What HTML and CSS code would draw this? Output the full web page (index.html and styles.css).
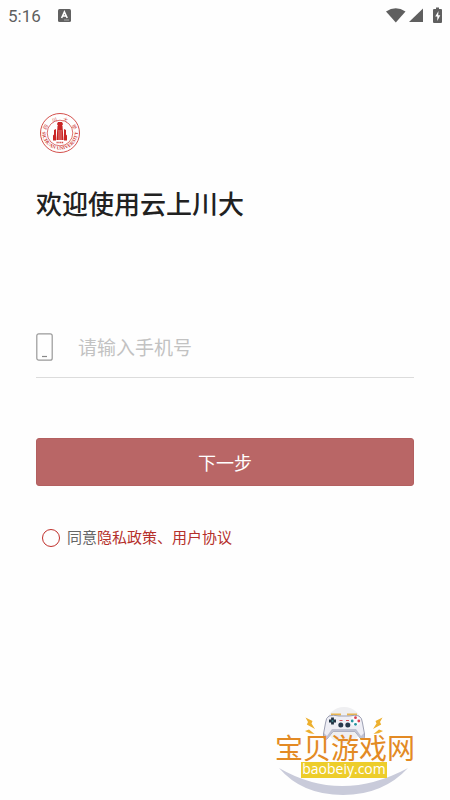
FILE: index.html
```html
<!DOCTYPE html>
<html lang="zh-CN">
<head>
<meta charset="utf-8">
<meta name="viewport" content="width=device-width, initial-scale=1">
<title>云上川大</title>
<link rel="stylesheet" href="styles.css">
</head>
<body>
<div class="screen">
  <header class="status">
    <span class="time">5:16</span>
    <svg class="app-badge" width="13" height="14" viewBox="0 0 13 14" aria-hidden="true">
      <rect width="13" height="13" rx="1.5" fill="#616161"/>
      <path d="M3.6 9 6.4 3 9.2 9M4.8 7H8" fill="none" stroke="#fff" stroke-width="1.6"/>
      <path d="M6 11h5" stroke="#aaa" stroke-width="1"/>
    </svg>
    <svg class="signals" width="56" height="18" viewBox="0 0 56 18" aria-hidden="true">
      <g fill="#5f5f5f">
        <path d="M0 4.500Q9.700 -1.800 19.500 4.500L9.800 15.500Z"/>
        <path d="M37 1.500V15H23Z"/>
        <path d="M48 2h2V0.500h3V2h2q1 0 1 1v12q0 1-1 1h-7q-1 0-1-1V3q0-1 1-1Z"/>
      </g>
      <path d="M52.500 4 49.200 9.500H51.300v4.500L54.300 8.300H52.200Z" fill="#fff"/>
    </svg>
  </header>

  <main class="login">
    <svg class="crest" width="42" height="42" viewBox="0 0 42 42" role="img" aria-label="四川大学">
      <defs>
        <path id="arc-top" d="M6.500 25A14.600 14.600 0 1 1 35.500 25"/>
        <path id="arc-bottom" d="M3.200 17A18 18 0 1 0 38.800 17"/>
      </defs>
      <g fill="none" stroke="#d4504c">
        <circle cx="21" cy="21" r="19.500" stroke-width="1"/>
        <circle cx="21" cy="21" r="12.800" stroke-width="0.800"/>
      </g>
      <text class="crest-cn"><textPath href="#arc-top" startOffset="50%">四　川　大　學</textPath></text>
      <text class="crest-en"><textPath href="#arc-bottom" startOffset="50%">SICHUAN UNIVERSITY</textPath></text>
      <g fill="#c92525">
        <path d="M19 10h4l1 2-1 2h-4l-1-2Z"/>
        <path d="M18.500 14h5l1 14h-7Z"/>
        <path d="M15 18l2-1v11.500h-3v-5l1-1Z"/>
        <path d="M27 18l-2-1v11.500h3v-5l-1-1Z"/>
      </g>
      <path d="M20 18v10M22 18v10" stroke="#f6c9c7" stroke-width="0.600"/>
      <path d="M17.500 30.500h7" stroke="#d4504c" stroke-width="1.500" stroke-dasharray="1.300 .5"/>
    </svg>
    <h1 class="title">欢迎使用云上川大</h1>

    <form class="form">
      <div class="field">
        <label class="field-icon" for="phone" aria-label="手机号">
          <svg width="17" height="28" viewBox="0 0 17 28" aria-hidden="true">
            <rect x="0.800" y="0.800" width="15.400" height="26.400" rx="2" fill="none" stroke="#999" stroke-width="1.200"/>
            <path d="M6 23.500h5" stroke="#888" stroke-width="1.200"/>
          </svg>
        </label>
        <input class="phone" id="phone" type="tel" placeholder="请输入手机号">
      </div>
      <button class="next" type="button">下一步</button>
      <div class="agree">
        <input class="agree-check" id="agree" type="checkbox">
        <label for="agree">同意</label><a href="#privacy">隐私政策</a><span class="sep">、</span><a href="#terms">用户协议</a>
      </div>
    </form>
  </main>

  <footer class="brand">
    <svg width="150" height="94" viewBox="0 0 150 94" role="img" aria-label="宝贝游戏网 baobeiy.com">
      <circle cx="74" cy="19" r="18" fill="#efeff1"/>
      <path d="M9 62Q71 98 138 62Q113 89 73 89Q32 89 9 62Z" fill="#c9cbda"/>
      <path d="M61 8.500h10M77 8.500h10" stroke="#e9b44c" stroke-width="2"/>
      <path d="M59 10Q63 8.500 69 10H79Q85 8.500 89 10Q92 11.500 92.500 17L94.500 28Q95 35 91 33L85 25.500H63L57 33Q53 35 53.500 28L55.500 17Q56 11.500 59 10Z" fill="#eeeef5" stroke="#9da0b3" stroke-width="1"/>
      <path d="M54 27Q53 35 57 33L63 25.500H85L91 33Q95 35 94 27L91 30 86 23H62L57 30Z" fill="#bfc1d1"/>
      <path d="M62.500 11.500v7M59 15h7" stroke="#203344" stroke-width="2.800"/>
      <circle cx="62.500" cy="15" r="1" fill="#42858d"/>
      <g fill="#28394d"><circle cx="70.800" cy="19" r="2.500"/><circle cx="77.800" cy="19" r="2.500"/></g>
      <path d="M69.500 14.500h3M76 14.500h3" stroke="#d6525a" stroke-width="1"/>
      <circle cx="85.500" cy="15" r="5" fill="#fafafd"/>
      <g fill="#dc4051"><circle cx="85.500" cy="11.700" r="1.400"/><circle cx="88.800" cy="15" r="1.400"/></g>
      <g fill="#2694a0"><circle cx="82.200" cy="15" r="1.400"/><circle cx="85.500" cy="18.300" r="1.400"/></g>
      <g fill="#edb02f">
        <path d="M35.500 11.500 42.500 15 41.500 17.500 45 23 36.800 18.500 38 16Z"/>
        <path d="M35 25 39 23.500 44.500 28 39.500 27.200Z"/>
        <path d="M112.500 11.500 105.500 15 106.500 17.500 103 23 111.200 18.500 110 16Z"/>
        <path d="M113 25 109 23.500 103.500 28 108.500 27.200Z"/>
      </g>
      <rect x="31" y="56" width="86" height="16" fill="#edcd2b"/>
      <text class="brand-name" x="75" y="53">宝贝游戏网</text>
      <text class="brand-url" x="74" y="68">baobeiy.com</text>
    </svg>
  </footer>
</div>
</body>
</html>
```
FILE: styles.css
```css
* {
  box-sizing: border-box;
}

body {
  margin: 0;
  background: #fefefe;
  color: #212121;
  font-family: Roboto, "Noto Sans CJK SC", sans-serif;
}

.screen {
  display: flex;
  flex-direction: column;
  min-height: 100vh;
}

.status {
  display: flex;
  align-items: center;
  height: 32px;
  padding: 0 8px;
}

.time {
  color: #5f5f5f;
  font-size: 17px;
  line-height: 32px;
}

.app-badge {
  margin-left: 17px;
}

.signals {
  margin-left: auto;
}

.login {
  flex: 1;
  padding: 80px 36px 0;
}

.crest {
  display: block;
  margin-left: 3px;
}

.crest-cn,
.crest-en {
  fill: #cf3f3b;
  text-anchor: middle;
}

.crest-cn {
  font-family: "Noto Sans CJK SC", sans-serif;
  font-size: 5px;
}

.crest-en {
  font-family: "Liberation Serif", serif;
  font-size: 5px;
  font-weight: 700;
}

.title {
  margin: 31px 0 0;
  font-size: 26px;
  font-weight: 500;
  line-height: 40px;
}

.form {
  margin-top: 91px;
}

.field {
  display: flex;
  align-items: center;
  height: 62px;
  border-bottom: 1px solid #dcdcdc;
}

.field-icon {
  display: flex;
}

.phone {
  flex: 1;
  min-width: 0;
  margin-left: 25px;
  padding: 4px 0 0;
  border: 0;
  outline: 0;
  background: transparent;
  color: #212121;
  font: inherit;
  font-size: 19px;
  line-height: 28px;
}

.phone::placeholder {
  color: #c2c2c2;
  opacity: 1;
}

.next {
  display: block;
  width: 100%;
  height: 48px;
  margin-top: 60px;
  border: 1px solid #b36060;
  border-radius: 3px;
  background: #b96666;
  color: #fff;
  font: inherit;
  font-size: 18px;
}

.agree {
  display: flex;
  align-items: center;
  margin-top: 40px;
  padding-left: 6px;
  color: #666;
  font-size: 15px;
  line-height: 24px;
}

.agree-check {
  appearance: none;
  width: 18px;
  height: 18px;
  margin: 0 7px 0 0;
  border: 1px solid #c0302b;
  border-radius: 50%;
}

.agree-check:checked {
  background: #c0302b;
}

.agree a,
.sep {
  color: #b5302b;
  text-decoration: none;
}

.brand {
  display: flex;
  justify-content: flex-end;
  padding-right: 30px;
}

.brand-name,
.brand-url {
  text-anchor: middle;
}

.brand-name {
  fill: #e38a24;
  font-family: "Noto Sans CJK SC", sans-serif;
  font-size: 28px;
}

.brand-url {
  fill: #fff;
  font-family: "Open Sans", sans-serif;
  font-size: 14px;
}
```
